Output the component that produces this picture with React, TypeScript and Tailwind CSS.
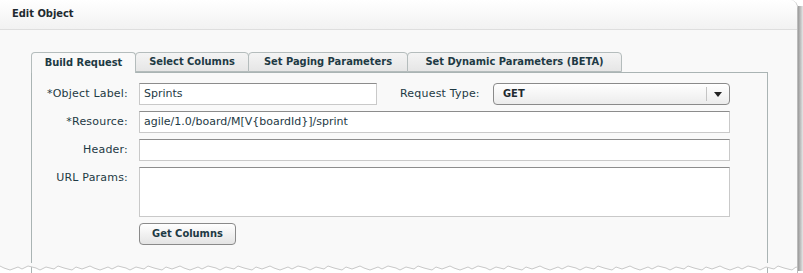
import React from "react";

const FONT = "font-['DejaVu_Sans',Verdana,sans-serif]";
const BOLD = "font-['DejaVu_Sans_Condensed','DejaVu_Sans',Tahoma,sans-serif] font-bold";

const TABS = [
  { label: "Build Request", w: "w-[105px]", active: true },
  { label: "Select Columns", w: "w-[114px]" },
  { label: "Set Paging Parameters", w: "w-[160px]" },
  { label: "Set Dynamic Parameters (BETA)", w: "w-[215px]" },
];

function Label({ children }: { children: React.ReactNode }) {
  return <div className="w-[97px] shrink-0 pr-[1px] text-right text-[11px] text-[#1e3a44] tracking-[0.2px]">{children}</div>;
}

function Input({ className = "", value = "" }: { className?: string; value?: string }) {
  return (
    <div
      className={`h-[22px] border border-[#c9c9c9] border-t-[#8c8c8c] bg-white px-[4px] text-[11px] leading-[20px] text-[#1e3a44] ${className}`}
    >
      {value}
    </div>
  );
}

function TornEdge() {
  // ragged bottom edge of the clipped dialog
  const pts: string[] = [];
  let x = 0;
  let i = 0;
  while (x <= 803) {
    const y = 3 + ((i * 7) % 5) - ((i * 3) % 3);
    pts.push(`${x},${y}`);
    x += 4 + (i % 3) * 2;
    i++;
  }
  return (
    <svg width="803" height="10" className="block">
      <polygon points={`0,0 ${pts.join(" ")} 803,0`} fill="#f9f9f9" />
      <polyline points={pts.join(" ")} fill="none" stroke="#c8c8c8" strokeWidth="1" />
    </svg>
  );
}

export default function App() {
  return (
    <div className={`w-[803px] h-[273px] bg-white overflow-hidden ${FONT}`}>
      <div className="flex">
        <div className="w-[798px] rounded-tr-[8px] border-r border-[#bcbcbc] overflow-hidden">
          <div className={`h-[30px] flex items-center pl-[12px] bg-gradient-to-b from-white to-[#f2f2f2] border-b border-[#dedede] text-[11px] text-[#1e2a30] ${BOLD}`}>
            Edit Object
          </div>
          <div className="bg-[#f9f9f9] pt-[22px] pl-[31px] h-[233px]">
            <div className="flex h-[20px]">
              {TABS.map((t) => (
                <div
                  key={t.label}
                  className={`${t.w} shrink-0 flex items-center justify-center text-[11px] text-[#1e3a44] rounded-t-[4px] border border-[#b4bcbc] ${BOLD} ${
                    t.active
                      ? "bg-[#f9f9f9] border-b-0 h-[21px] relative z-10"
                      : "bg-gradient-to-b from-[#f4f4f4] to-[#e6e6e6] -ml-px"
                  }`}
                >
                  {t.label}
                </div>
              ))}
            </div>
            <div className="w-[737px] h-[220px] border border-[#aab4b4] border-b-0 pt-[10px]">
              <div className="flex flex-col gap-[6px]">
                <div className="flex items-center">
                  <Label>*Object Label:</Label>
                  <Input className="ml-[10px] w-[238px]" value="Sprints" />
                  <div className="ml-[23px] w-[93px] text-[11px] text-[#1e3a44] tracking-[0.2px]">Request Type:</div>
                  <div className="w-[237px] h-[22px] flex items-center rounded-[4px] border border-[#8a8a8a] bg-gradient-to-b from-white to-[#ececec] shadow-[inset_0_1px_0_#fff]">
                    <span className={`flex-1 pl-[9px] text-[11px] text-[#1e2a30] ${BOLD}`}>GET</span>
                    <span className="w-px h-[14px] bg-[#c4c4c4]" />
                    <svg width="22" height="10" viewBox="0 0 22 10">
                      <path d="M7 3h8l-4 5z" fill="#222" />
                    </svg>
                  </div>
                </div>
                <div className="flex items-center">
                  <Label>*Resource:</Label>
                  <Input className="ml-[10px] w-[591px]" value="agile/1.0/board/M[V{boardId}]/sprint" />
                </div>
                <div className="flex items-center">
                  <Label>Header:</Label>
                  <Input className="ml-[10px] w-[591px]" />
                </div>
                <div className="flex items-start">
                  <div className="pt-[3px]">
                    <Label>URL Params:</Label>
                  </div>
                  <Input className="ml-[10px] w-[591px] !h-[50px]" />
                </div>
                <div className="flex">
                  <div className="w-[107px] shrink-0" />
                  <button className={`w-[97px] h-[22px] rounded-[4px] border border-[#8a8a8a] bg-gradient-to-b from-white to-[#e4e4e4] text-[11px] text-[#1e3a44] ${BOLD}`}>
                    Get Columns
                  </button>
                </div>
              </div>
            </div>
          </div>
          <TornEdge />
        </div>
        <div className="w-[5px] h-[265px] mt-[6px] bg-gradient-to-r from-[#9a9a9a] to-[#e6e6e6]" />
      </div>
    </div>
  );
}
